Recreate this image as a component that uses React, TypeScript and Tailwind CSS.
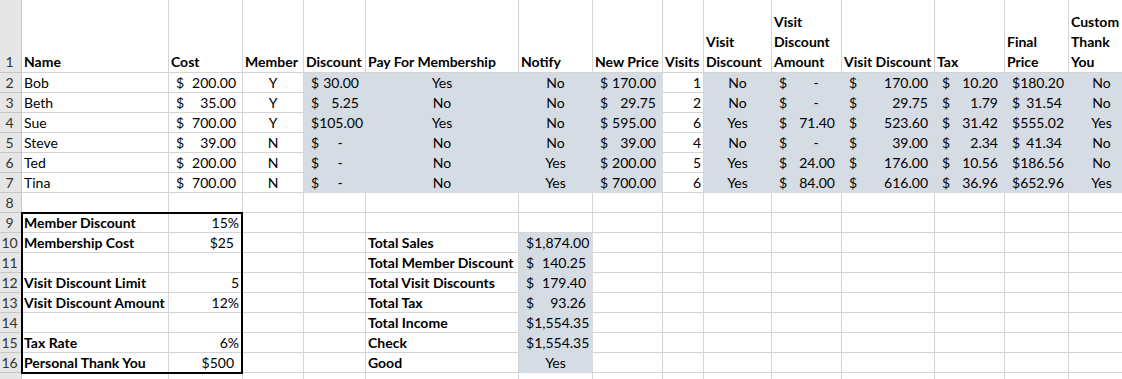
import React from "react";

type Cell = {
  k?: "l" | "c" | "r" | "acct" | "rp" | "pct";
  t?: string;
  v?: string | null;
  b?: boolean;
  s?: boolean;
};

const headers: (string | string[])[] = [
  "Name",
  "Cost",
  "Member",
  "Discount",
  "Pay For Membership",
  "Notify",
  "New Price",
  "Visits",
  ["Visit", "Discount"],
  ["Visit", "Discount", "Amount"],
  "Visit Discount",
  "Tax",
  ["Final", "Price"],
  ["Custom", "Thank", "You"],
];

const people: (string | null)[][] = [
  ["Bob", "200.00", "Y", "30.00", "Yes", "No", "170.00", "1", "No", null, "170.00", "10.20", "180.20", "No"],
  ["Beth", "35.00", "Y", "5.25", "No", "No", "29.75", "2", "No", null, "29.75", "1.79", "31.54", "No"],
  ["Sue", "700.00", "Y", "105.00", "Yes", "No", "595.00", "6", "Yes", "71.40", "523.60", "31.42", "555.02", "Yes"],
  ["Steve", "39.00", "N", null, "No", "No", "39.00", "4", "No", null, "39.00", "2.34", "41.34", "No"],
  ["Ted", "200.00", "N", null, "No", "Yes", "200.00", "5", "Yes", "24.00", "176.00", "10.56", "186.56", "No"],
  ["Tina", "700.00", "N", null, "No", "Yes", "700.00", "6", "Yes", "84.00", "616.00", "36.96", "652.96", "Yes"],
];

const kinds: Cell["k"][] = ["l", "acct", "c", "acct", "c", "c", "acct", "r", "c", "acct", "acct", "acct", "acct", "c"];
const shadedCols = [false, false, false, true, true, true, true, false, true, true, true, true, true, true];

const box: [string, Cell][] = [
  ["Member Discount", { k: "pct", t: "15%" }],
  ["Membership Cost", { k: "rp", t: "$25" }],
  ["", {}],
  ["Visit Discount Limit", { k: "pct", t: "5" }],
  ["Visit Discount Amount", { k: "pct", t: "12%" }],
  ["", {}],
  ["Tax Rate", { k: "pct", t: "6%" }],
  ["Personal Thank You", { k: "rp", t: "$500" }],
];

const totals: ([string, Cell] | null)[] = [
  null,
  ["Total Sales", { k: "acct", v: "1,874.00", s: true }],
  ["Total Member Discount", { k: "acct", v: "140.25", s: true }],
  ["Total Visit Discounts", { k: "acct", v: "179.40", s: true }],
  ["Total Tax", { k: "acct", v: "93.26", s: true }],
  ["Total Income", { k: "acct", v: "1,554.35", s: true }],
  ["Check", { k: "acct", v: "1,554.35", s: true }],
  ["Good", { k: "c", t: "Yes", s: true }],
];

function buildRows(): Cell[][] {
  const rows: Cell[][] = [];
  for (const p of people) {
    rows.push(
      p.map((val, i) => {
        const k = kinds[i];
        if (k === "acct") return { k, v: val, s: shadedCols[i] };
        return { k, t: val ?? "", s: shadedCols[i] };
      })
    );
  }
  rows.push(Array.from({ length: 14 }, () => ({})));
  for (let i = 0; i < 8; i++) {
    const r: Cell[] = Array.from({ length: 14 }, () => ({}));
    r[0] = { k: "l", t: box[i][0], b: true };
    r[1] = box[i][1];
    const tt = totals[i];
    if (tt) {
      r[4] = { k: "l", t: tt[0], b: true };
      r[5] = tt[1];
    }
    rows.push(r);
  }
  rows.push(Array.from({ length: 14 }, () => ({})));
  return rows;
}

function DataCell({ c }: { c: Cell }) {
  const color = c.s ? "bg-[#d6dce4] border-[#d6dce4]" : "bg-white border-[#d4d4d4]";
  const base = `flex items-end border-r border-b overflow-hidden whitespace-nowrap leading-[19px] text-black ${color}`;
  if (c.k === "acct") {
    return (
      <div className={`${base} justify-between pl-[7px] pr-[6px]`}>
        <span>$</span>
        {c.v ? (
          <span>{c.v}</span>
        ) : (
          <span>
            -<span className="invisible">00</span>
          </span>
        )}
      </div>
    );
  }
  if (c.k === "c") return <div className={`${base} justify-center`}>{c.t}</div>;
  if (c.k === "r") return <div className={`${base} justify-end pr-[2px]`}>{c.t}</div>;
  if (c.k === "pct") return <div className={`${base} justify-end pr-[3px]`}>{c.t}</div>;
  if (c.k === "rp") return <div className={`${base} justify-end pr-[8px]`}>{c.t}</div>;
  if (c.k === "l")
    return <div className={`${base} pl-[2px] ${c.b ? "font-bold" : ""}`}>{c.t}</div>;
  return <div className={base}></div>;
}

function RowHead({ n, tall }: { n?: number; tall?: boolean }) {
  return (
    <div
      className={`flex items-end justify-center pr-[2px] bg-[#e6e6e6] border-r border-b border-[#c6c6c6] text-[#333] ${
        tall ? "leading-[20px]" : "leading-[19px]"
      }`}
    >
      {n}
    </div>
  );
}

export default function App() {
  const rows = buildRows();
  return (
    <div
      className="relative w-[1122px] h-[379px] overflow-hidden bg-white text-[14px]"
      style={{ fontFamily: "Lato, 'Liberation Sans', sans-serif" }}
    >
      <div className="grid grid-cols-[22px_147px_74px_61px_62px_153px_74px_70px_41px_68px_70px_93px_70px_64px_66px] grid-rows-[73px_repeat(17,20px)] w-[1135px]">
        <RowHead n={1} tall />
        {headers.map((h, i) => (
          <div
            key={i}
            className="flex flex-col justify-end pl-[2px] border-r border-b border-[#d4d4d4] bg-white font-bold text-black leading-[20px] whitespace-nowrap overflow-hidden"
          >
            {(Array.isArray(h) ? h : [h]).map((line, j) => (
              <div key={j}>{line}</div>
            ))}
          </div>
        ))}
        {rows.map((r, ri) => (
          <React.Fragment key={ri}>
            <RowHead n={ri + 2 <= 16 ? ri + 2 : undefined} />
            {r.map((c, ci) => (
              <DataCell key={ci} c={c} />
            ))}
          </React.Fragment>
        ))}
      </div>
      <div className="absolute left-[21px] top-[212px] w-[222px] h-[162px] border-2 border-black pointer-events-none" />
    </div>
  );
}
